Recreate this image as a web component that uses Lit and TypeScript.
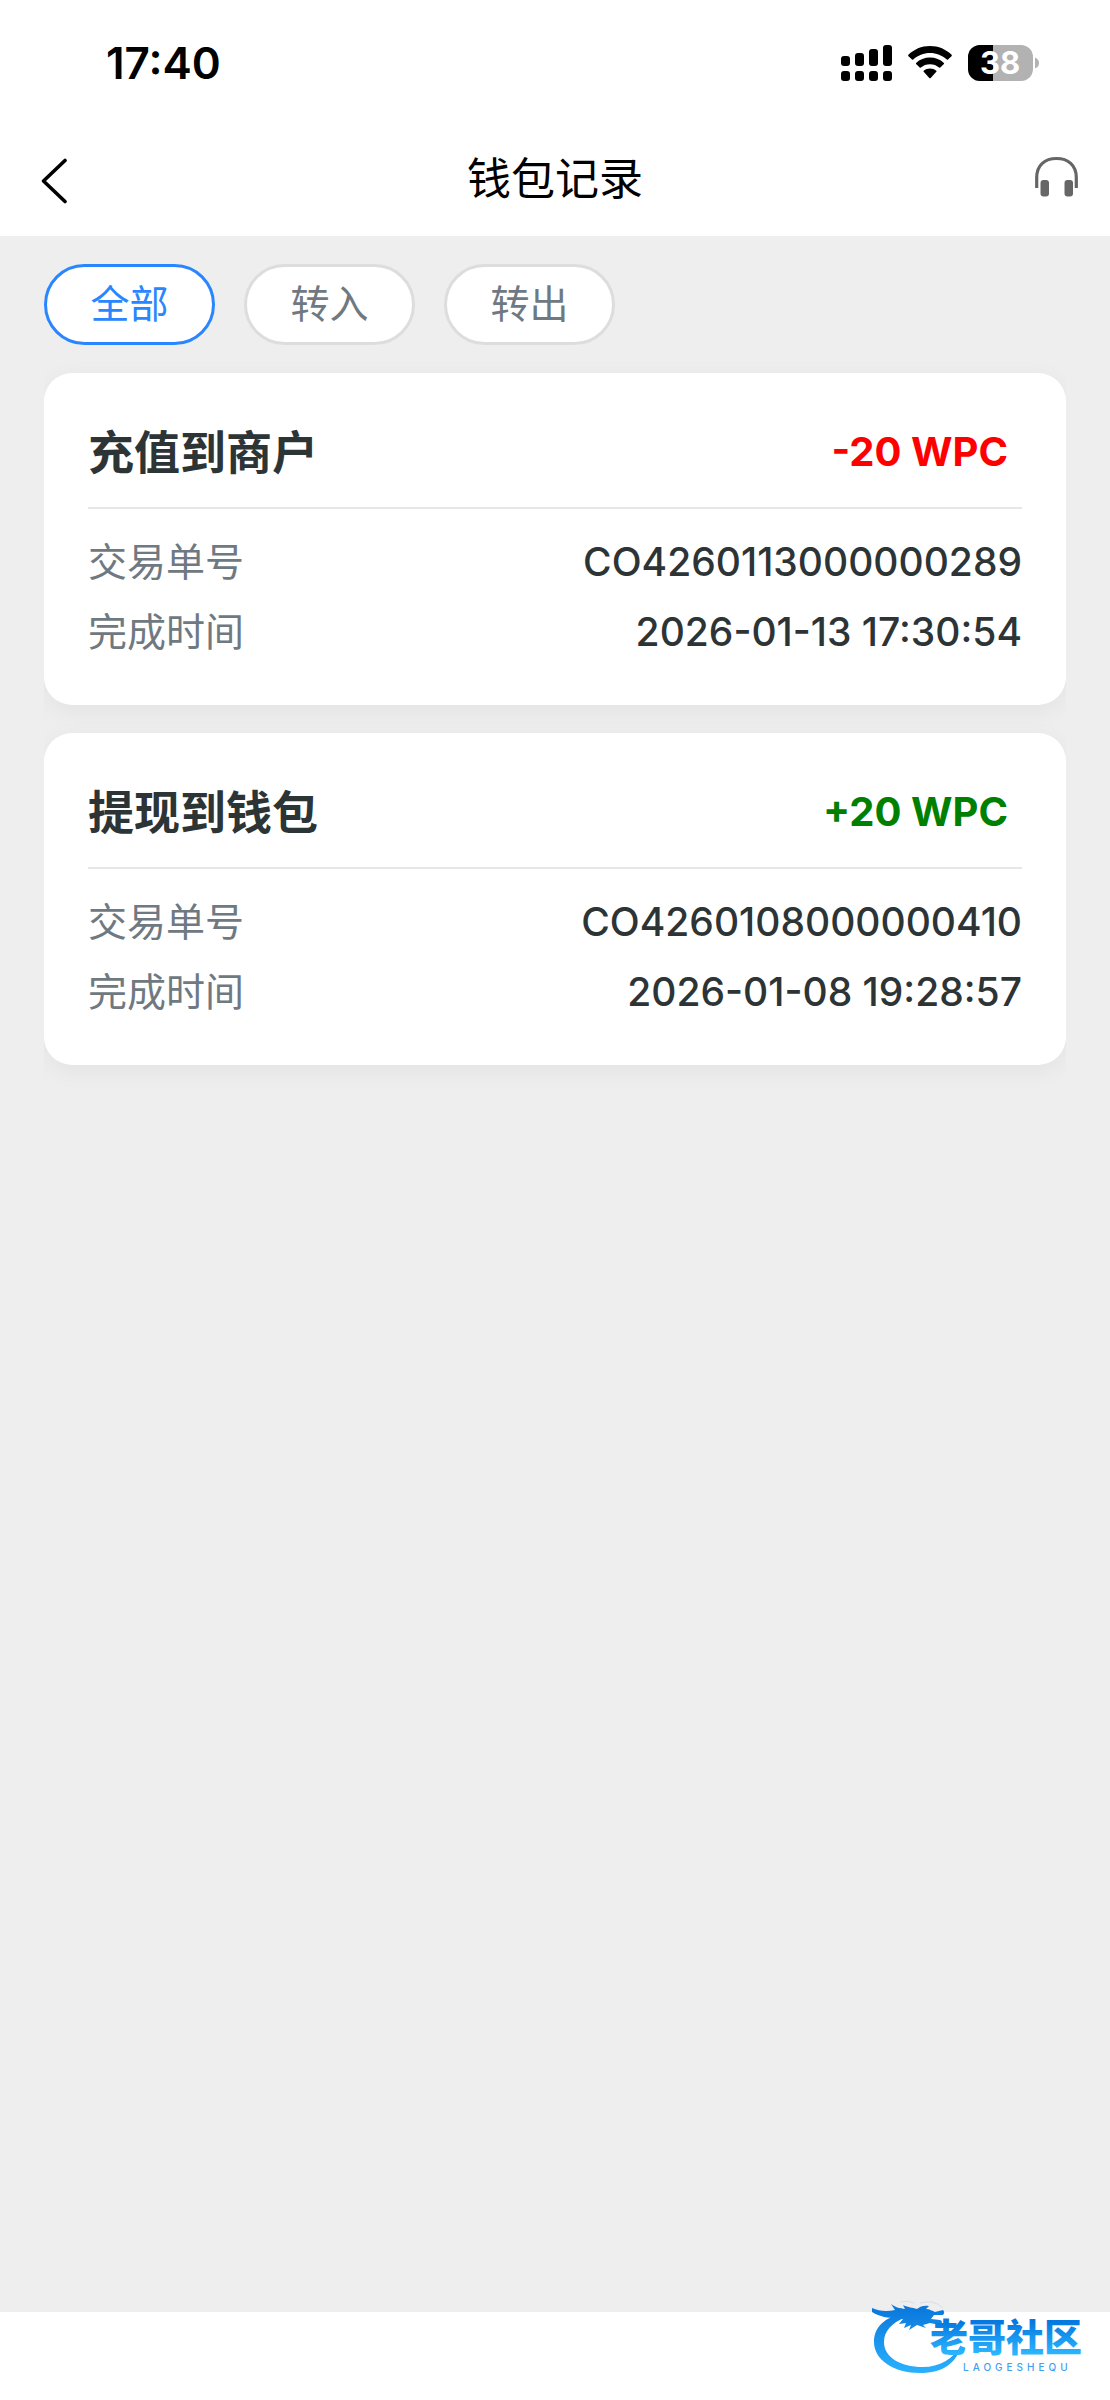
import { LitElement, html, svg, css } from "lit";
import { customElement, property, state } from "lit/decorators.js";

type Direction = "in" | "out";
type Filter = "all" | Direction;

interface WalletRecord {
  title: string;
  amount: number;
  direction: Direction;
  order: string;
  time: string;
}

const RECORDS: WalletRecord[] = [
  { title: "充值到商户", amount: 20, direction: "out", order: "CO4260113000000289", time: "2026-01-13 17:30:54" },
  { title: "提现到钱包", amount: 20, direction: "in", order: "CO4260108000000410", time: "2026-01-08 19:28:57" },
];

const FILTERS: { id: Filter; label: string }[] = [
  { id: "all", label: "全部" },
  { id: "in", label: "转入" },
  { id: "out", label: "转出" },
];

@customElement("status-bar")
export class StatusBar extends LitElement {
  static styles = css`
    :host {
      display: flex;
      align-items: center;
      justify-content: space-between;
      height: 126px;
      padding: 0 71px 0 106px;
      box-sizing: border-box;
    }
    .time {
      font-size: 44px;
      font-weight: 600;
      line-height: 52px;
    }
    .icons {
      display: flex;
      align-items: center;
      gap: 16px;
    }
    .icon {
      display: block;
    }
    .level {
      font: 700 31px "Inter", sans-serif;
      fill: #fff;
    }
  `;

  render() {
    const bars = [11, 8, 4, 0];
    return html`
      <span class="time">17:40</span>
      <div class="icons">
        <svg class="icon" width="51" height="36" viewBox="0 0 51 36" role="img" aria-label="信号">
          ${bars.map(
            (top, i) => svg`
              <rect x=${i * 14} y=${top} width="9" height=${21 - top} rx="3"></rect>
              <rect x=${i * 14} y="26" width="9" height="10" rx="3"></rect>`
          )}
        </svg>
        <svg class="icon" width="44" height="36" viewBox="0 0 44 36" role="img" aria-label="Wi-Fi">
          <path d="M22 1C13.500 1 5.800 4.400 0.400 9.800Q-.1 10.500.5 11.200L4 14.600Q4.500 15 5.200 14.600C9.800 10.400 15.600 8 22 8s12.200 2.400 16.800 6.600q.7.400 1.200 0L43.500 11.200q.6-.7.1-1.400C38.200 4.400 30.500 1 22 1Z"></path>
          <path d="M22 12.500c-5.400 0-10.200 2-13.900 5.400q-.5.600 0 1.200l3.600 3.500q.6.500 1.200 0c2.500-2.100 5.600-3.300 9.100-3.300s6.600 1.200 9.100 3.300q.6.500 1.200 0l3.600-3.500q.5-.6 0-1.200C32.200 14.500 27.400 12.500 22 12.500Z"></path>
          <path d="M22 23.500c-2.400 0-4.500.8-6.300 2.200q-.5.500 0 1.100L21.300 33q.7.700 1.400 0l5.600-6.200q.5-.6 0-1.100C26.500 24.300 24.400 23.500 22 23.500Z"></path>
        </svg>
        <svg class="icon" width="71" height="36" viewBox="0 0 71 36" role="img" aria-label="电量 38%">
          <rect width="65" height="36" rx="12" fill="#b2b2b2"></rect>
          <path d="M12 0H25V36H12A12 12 0 0 1 0 24V12A12 12 0 0 1 12 0Z"></path>
          <path d="M67 12.500q4 1.500 4 5.500t-4 5.500Z" fill="#b2b2b2"></path>
          <text class="level" x="32" y="29" text-anchor="middle">38</text>
        </svg>
      </div>
    `;
  }
}

@customElement("record-card")
export class RecordCard extends LitElement {
  @property({ attribute: false }) record!: WalletRecord;

  static styles = css`
    :host {
      display: block;
      padding: 44px 44px 38px;
      border-radius: 28px;
      background: #fff;
      box-shadow: 0 6px 24px rgba(0, 0, 0, 0.05);
    }
    .head {
      display: flex;
      align-items: center;
      justify-content: space-between;
      padding-bottom: 20px;
      border-bottom: 2px solid #e6e6e6;
    }
    .title {
      margin: 0;
      font-size: 46px;
      font-weight: 700;
      line-height: 70px;
    }
    .amount {
      padding-right: 14px;
      font-size: 40px;
      font-weight: 700;
      line-height: 70px;
    }
    .in {
      color: #008000;
    }
    .out {
      color: #ff0000;
    }
    .details {
      margin: 18px 0 0;
    }
    .row {
      display: flex;
      justify-content: space-between;
      font-size: 39px;
      line-height: 70px;
    }
    .label {
      color: #6f7982;
    }
    .value {
      margin: 0;
      font-weight: 500;
    }
  `;

  render() {
    const { title, amount, direction, order, time } = this.record;
    return html`
      <div class="head">
        <h2 class="title">${title}</h2>
        <span class="amount ${direction}">${direction === "in" ? "+" : "-"}${amount} WPC</span>
      </div>
      <dl class="details">
        <div class="row"><dt class="label">交易单号</dt><dd class="value">${order}</dd></div>
        <div class="row"><dt class="label">完成时间</dt><dd class="value">${time}</dd></div>
      </dl>
    `;
  }
}

@customElement("site-badge")
export class SiteBadge extends LitElement {
  static styles = css`
    :host {
      display: block;
    }
    .badge {
      display: block;
    }
    .name {
      font: 900 38px "Noto Sans CJK SC", sans-serif;
    }
    .latin {
      font: 500 10px "Inter", sans-serif;
      letter-spacing: 4px;
      fill: #3f9ff0;
    }
  `;

  render() {
    return html`
      <svg class="badge" width="224" height="80" viewBox="0 0 224 80" role="img" aria-label="老哥社区">
        <defs>
          <linearGradient id="ring" gradientUnits="userSpaceOnUse" x1="0" y1="8" x2="0" y2="76">
            <stop offset="0" stop-color="#0a78dc"></stop>
            <stop offset="1" stop-color="#2bb4ff"></stop>
          </linearGradient>
          <linearGradient id="word" gradientUnits="userSpaceOnUse" x1="0" y1="22" x2="0" y2="54">
            <stop offset="0" stop-color="#0678e0"></stop>
            <stop offset="1" stop-color="#2cb6ff"></stop>
          </linearGradient>
        </defs>
        <g fill="url(#ring)">
          <path d="M28 14C10 19 2 29 2 42c0 18 20 31 46 31 23 0 37-10 41-28-7 14-22 22-38 22C28 67 12 57 12 42c0-11 8-19 20-24Z"></path>
          <path d="M0 8c7 3 14 4 23 2l-4-6c5 4 9 4 14 5l-2-4c6 3 9 2 14 4 3-3 8-4 12-3l-3 3c4 0 6 2 9 3l8-2c2 2 1 4 0 5h-9l-3 4 9 1c3 1 2 4 0 5l-10-2-7 2 3 3-9-3-8 5 2-5-7 3 2-5-7 1 4-5-6-1c-9 0-17-1-25-6Z"></path>
        </g>
        <path d="M28 2Q36 0 42 3M48 3Q62-1 71 8" fill="none" stroke="#d5dfe8" stroke-width="1"></path>
        <text class="name" x="58" y="51" fill="url(#word)">老哥社区</text>
        <text class="latin" x="91" y="71">LAOGESHEQU</text>
      </svg>
    `;
  }
}

@customElement("app-root")
export class AppRoot extends LitElement {
  @state() private filter: Filter = "all";

  static styles = css`
    :host {
      display: flex;
      flex-direction: column;
      position: relative;
      min-height: 100vh;
      background: #fff;
      color: #2d3436;
      font-family: "Inter", "Noto Sans CJK SC", sans-serif;
    }
    .status {
      color: #000;
    }
    .nav {
      display: grid;
      grid-template-columns: 1fr auto 1fr;
      align-items: center;
      height: 110px;
      padding: 0 30px;
      color: #000;
    }
    .nav-title {
      margin: 0;
      padding-bottom: 4px;
      font-size: 44px;
      font-weight: 400;
      line-height: 64px;
    }
    .icon-button {
      display: block;
      padding: 0 10px;
      border: 0;
      background: none;
      color: inherit;
      cursor: pointer;
    }
    .support {
      justify-self: end;
      padding: 0 0 8px;
      color: #666;
    }
    .icon {
      display: block;
    }
    .content {
      flex: 1;
      padding: 28px 44px;
      background: #eee;
    }
    .filters {
      display: flex;
      gap: 29px;
    }
    .filter {
      width: 171px;
      height: 81px;
      padding: 0 0 8px;
      border: 3px solid #ddd;
      border-radius: 41px;
      background: #fff;
      color: #6f7982;
      font: inherit;
      font-size: 39px;
      cursor: pointer;
    }
    .filter[aria-pressed="true"] {
      border-color: #2a86ff;
      color: #2a86ff;
    }
    .list {
      display: flex;
      flex-direction: column;
      gap: 28px;
      margin-top: 28px;
      overflow-x: clip;
    }
    .bottom {
      height: 88px;
    }
    .watermark {
      position: absolute;
      right: 14px;
      bottom: 20px;
    }
  `;

  render() {
    const shown = RECORDS.filter((r) => this.filter === "all" || r.direction === this.filter);
    return html`
      <status-bar class="status"></status-bar>
      <header class="nav">
        <button class="icon-button" aria-label="返回">
          <svg class="icon" width="28" height="46" viewBox="0 0 28 46" fill="none" stroke="currentColor"
            stroke-width="3.600" stroke-linecap="round" stroke-linejoin="round">
            <path d="M25 2.500 3.500 23 25 43.500"></path>
          </svg>
        </button>
        <h1 class="nav-title">钱包记录</h1>
        <button class="icon-button support" aria-label="客服">
          <svg class="icon" width="46" height="46" viewBox="0 0 46 46">
            <path d="M2.700 34V23.500C2.700 11 11 4.500 22.500 4.500S42.300 11 42.300 23.500V34" fill="none" stroke="currentColor" stroke-width="3.200"></path>
            <rect x="6.500" y="26" width="8.500" height="16.500" rx="3" fill="currentColor"></rect>
            <rect x="30.500" y="26" width="8.500" height="16.500" rx="3" fill="currentColor"></rect>
          </svg>
        </button>
      </header>
      <main class="content">
        <div class="filters" role="group" aria-label="记录类型">
          ${FILTERS.map(
            (f) => html`
              <button class="filter" aria-pressed=${this.filter === f.id ? "true" : "false"}
                @click=${() => (this.filter = f.id)}>${f.label}</button>`
          )}
        </div>
        <div class="list">
          ${shown.map((r) => html`<record-card .record=${r}></record-card>`)}
        </div>
      </main>
      <footer class="bottom"></footer>
      <site-badge class="watermark"></site-badge>
    `;
  }
}
